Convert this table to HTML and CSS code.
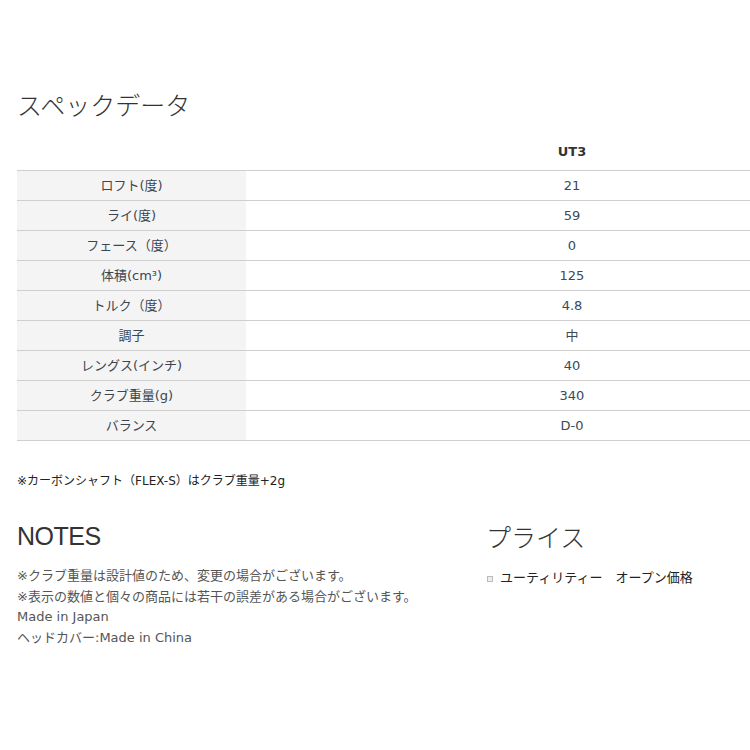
FILE: index.html
```html
<!DOCTYPE html>
<html lang="ja">
<head>
<meta charset="utf-8">
<title>スペックデータ</title>
<link rel="stylesheet" href="styles.css">
</head>
<body>
<div class="page">
  <h1 class="title">スペックデータ</h1>
  <table class="spec">
    <thead>
      <tr><th class="label-head"></th><th class="value-head">UT3</th></tr>
    </thead>
    <tbody>
      <tr><td class="label">ロフト(度)</td><td class="value">21</td></tr>
      <tr><td class="label">ライ(度)</td><td class="value">59</td></tr>
      <tr><td class="label">フェース（度）</td><td class="value">0</td></tr>
      <tr><td class="label">体積(cm³)</td><td class="value">125</td></tr>
      <tr><td class="label">トルク（度）</td><td class="value">4.8</td></tr>
      <tr><td class="label">調子</td><td class="value">中</td></tr>
      <tr><td class="label">レングス(インチ)</td><td class="value">40</td></tr>
      <tr><td class="label">クラブ重量(g)</td><td class="value">340</td></tr>
      <tr><td class="label">バランス</td><td class="value">D-0</td></tr>
    </tbody>
  </table>
  <p class="footnote">※カーボンシャフト（FLEX-S）はクラブ重量+2g</p>
  <div class="bottom">
    <section class="notes">
      <h2 class="notes-title">NOTES</h2>
      <ul class="notes-list">
        <li>※クラブ重量は設計値のため、変更の場合がございます。</li>
        <li>※表示の数値と個々の商品には若干の誤差がある場合がございます。</li>
        <li>Made in Japan</li>
        <li>ヘッドカバー:Made in China</li>
      </ul>
    </section>
    <section class="price">
      <h2 class="price-title">プライス</h2>
      <ul class="price-list">
        <li>ユーティリティー　オープン価格</li>
      </ul>
    </section>
  </div>
</div>
</body>
</html>
```

FILE: styles.css
```css
html, body {
  margin: 0;
  padding: 0;
  background: #fff;
  overflow: hidden;
}
body {
  font-family: "DejaVu Sans", "Noto Sans CJK JP", sans-serif;
  font-size: 13px;
  color: #333;
}
.page {
  padding-left: 17px;
  width: 900px;
}
.title {
  margin: 86px 0 0 0;
  font-family: "Noto Sans CJK JP", sans-serif;
  font-weight: 300;
  font-size: 25px;
  line-height: 36px;
  color: #333;
  letter-spacing: 0;
}
.spec {
  margin-top: 12px;
  width: 881px;
  border-collapse: separate;
  border-spacing: 0;
  font-size: 13px;
}
.spec th, .spec td {
  padding: 0;
  text-align: center;
  border-bottom: 1px solid #cfcfcf;
}
.spec th {
  height: 36px;
  line-height: 36px;
  font-weight: bold;
  font-size: 13px;
  color: #333;
  vertical-align: middle;
}
.label-head {
  width: 229px;
}
.spec td {
  height: 29px;
  line-height: 29px;
  vertical-align: middle;
}
.spec td.label {
  width: 229px;
  background: #f4f4f4;
  color: #3b4650;
}
.spec td.value {
  color: #3b4a57;
}
.footnote {
  margin: 30px 0 0 0;
  font-size: 12px;
  line-height: 20px;
  color: #222;
}
.bottom {
  display: flex;
  margin-top: 28px;
}
.notes {
  width: 469px;
}
.notes-title {
  margin: 0;
  font-family: "Liberation Sans", "Noto Sans CJK JP", sans-serif;
  font-weight: normal;
  font-size: 25px;
  letter-spacing: -0.5px;
  line-height: 34px;
  color: #333;
}
.price-title {
  margin: 0;
  font-family: "Noto Sans CJK JP", sans-serif;
  font-weight: 300;
  font-size: 25px;
  line-height: 34px;
  color: #333;
}
.notes-list, .price-list {
  list-style: none;
  margin: 13px 0 0 0;
  padding: 0;
}
.price-list {
  margin-top: 15px;
}
.notes-list li {
  line-height: 20.7px;
  color: #555;
}
.price-list li {
  display: flex;
  align-items: center;
  line-height: 20px;
  color: #222;
}
.price-list li::before {
  content: "";
  width: 4px;
  height: 4px;
  border: 1px solid #bbb;
  background: #eee;
  margin: 1px 7px 0 1px;
  flex: none;
}
```
